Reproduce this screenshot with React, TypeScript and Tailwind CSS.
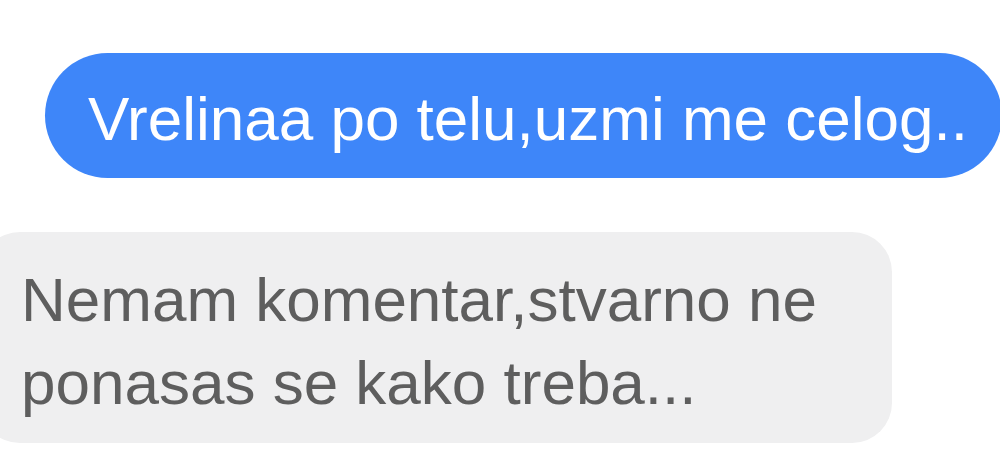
import React from 'react'

const App = () => {
  return (
    <div className="w-[1000px] h-[465px] overflow-hidden bg-white" style={{ fontFamily: '"Liberation Sans", Arial, sans-serif' }}>
      <div className="flex flex-col pt-[53px]">
        {/* outgoing message */}
        <div className="ml-[45px] w-[957px] h-[125px] rounded-full bg-[#3e86f9] pl-[43px] pt-[31px]">
          <div className="text-[62px] leading-[70px] text-white whitespace-nowrap">Vrelinaa po telu,uzmi me celog..</div>
        </div>

        {/* incoming message */}
        <div className="mt-[54px] ml-[-20px] w-[912px] h-[211px] rounded-[40px] bg-[#efeff0] pl-[41px] pt-[26px]">
          <div className="text-[62px] leading-[83px] text-[#5e5e5e]">
            <div className="whitespace-nowrap">Nemam komentar,stvarno ne</div>
            <div className="whitespace-nowrap">ponasas se kako treba...</div>
          </div>
        </div>
      </div>
    </div>
  )
}

export default App
